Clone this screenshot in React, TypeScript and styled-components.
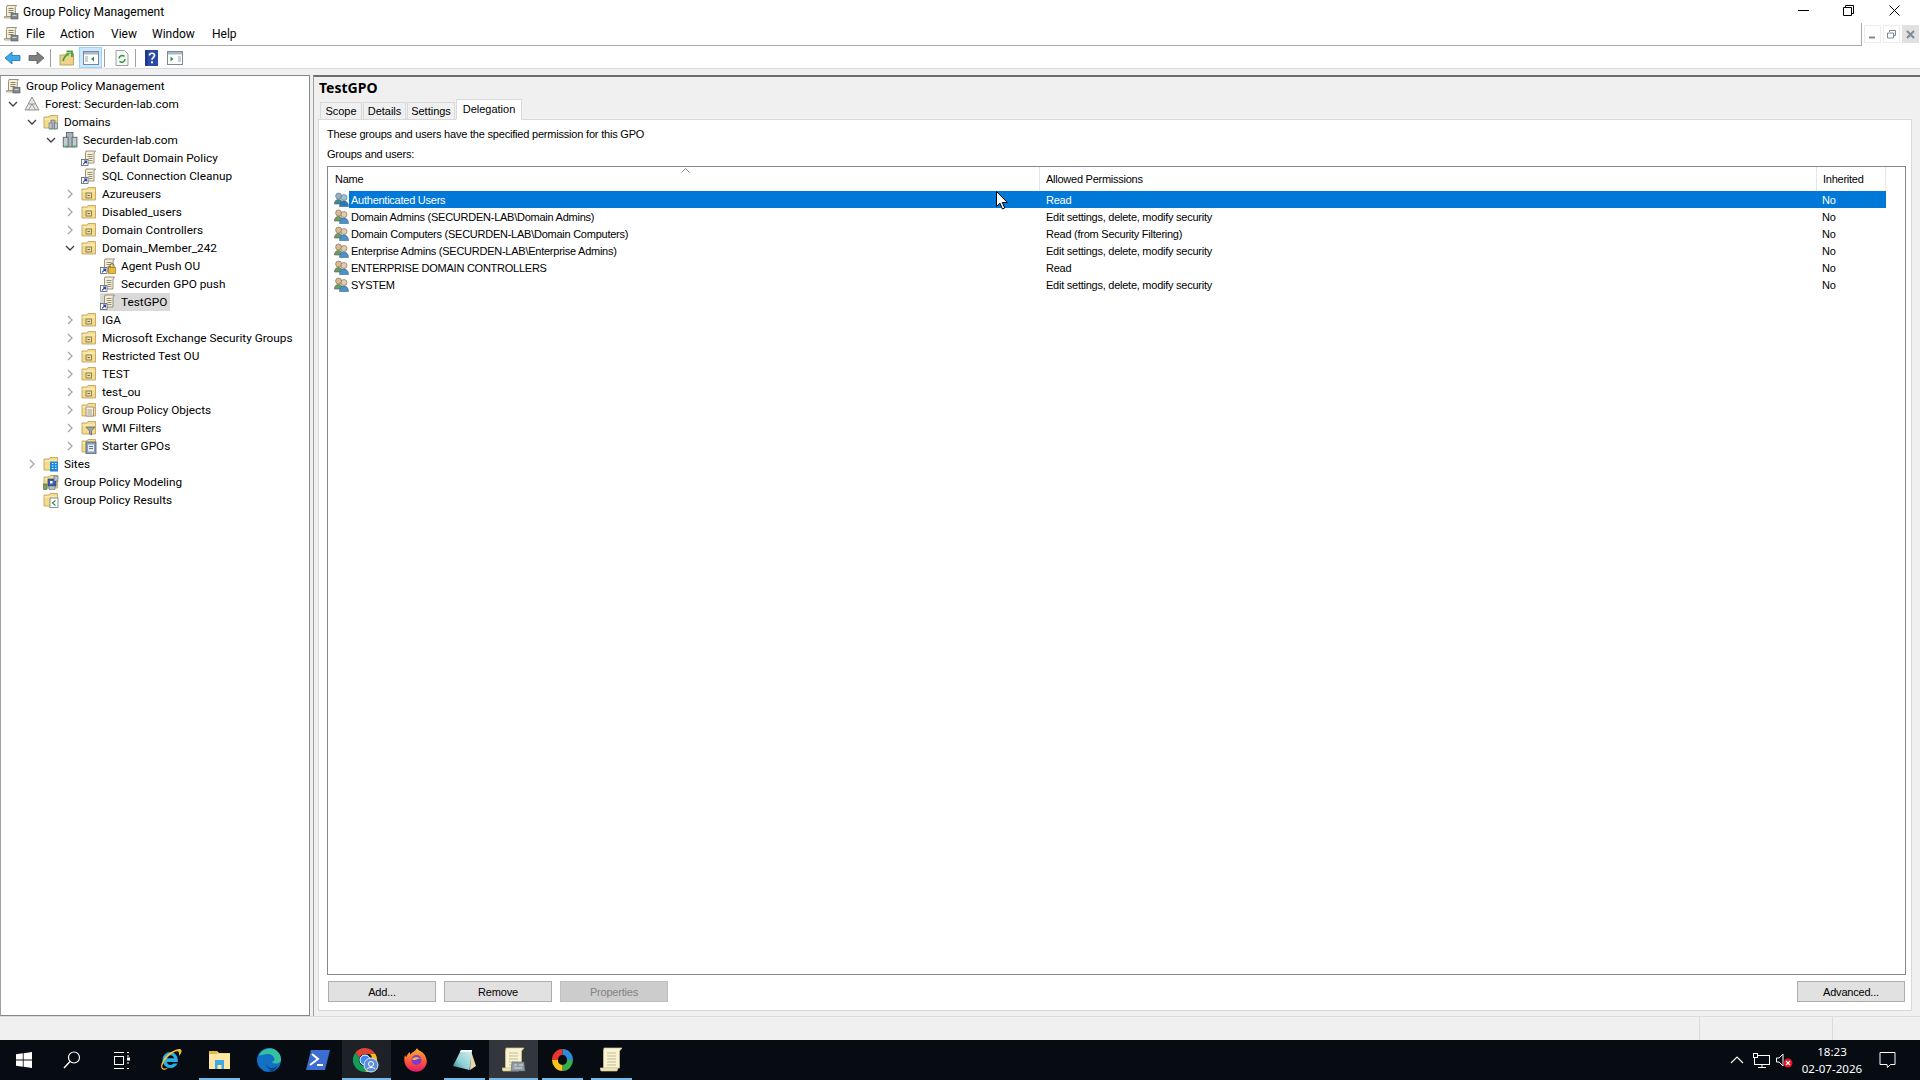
import * as React from 'react';
import styled, { createGlobalStyle } from 'styled-components';

const GlobalStyle = createGlobalStyle`
    html, body {
        margin: 0;
        padding: 0;
        background: #f0f0f0;
        overflow: hidden;
    }
    * {
        box-sizing: border-box;
    }
`;

const UI_FONT = `"Noto Sans", "Open Sans", sans-serif`;
const TREE_FONT = `Roboto, "Noto Sans", sans-serif`;
const LIST_FONT = `"Liberation Sans", Arial, sans-serif`;

//Page:

const Screen = styled.div`
    width: 1920px;
    height: 1080px;
    display: flex;
    flex-direction: column;
    font-family: ${UI_FONT};
    font-size: 12px;
    color: #000;
    background: #f0f0f0;
`;

const TitleBar = styled.div`
    height: 23px;
    flex: none;
    display: flex;
    align-items: center;
    background: #fff;
    padding-left: 3px;
`;

const TitleText = styled.span`
    margin-left: 4px;
    font-family: ${TREE_FONT};
    font-size: 12px;
`;

const WindowControls = styled.div`
    margin-left: auto;
    display: flex;
    align-items: center;
    height: 23px;
    padding: 0 3px 3px 0;
`;

const WindowButton = styled.div`
    width: 45.5px;
    height: 20px;
    display: flex;
    align-items: center;
    justify-content: center;
`;

const MenuRow = styled.div`
    height: 23px;
    flex: none;
    display: flex;
    background: #fff;
`;

const MenuBar = styled.div`
    width: 1862px;
    display: flex;
    align-items: center;
    padding-left: 3px;
    border-bottom: 1px solid #a9a9a9;
    border-right: 1px solid #a9a9a9;
`;

const MenuSpacer = styled.div`
    width: 7px;
`;

const MenuItem = styled.span<{ $width: number }>`
    width: ${(props) => props.$width}px;
    font-family: ${TREE_FONT};
    font-size: 12px;
`;

const MdiControls = styled.div`
    display: flex;
    align-items: center;
    gap: 2px;
    padding-left: 2px;
    height: 22px;
`;

const MdiButton = styled.div<{ $close?: boolean }>`
    width: 17px;
    height: 18px;
    display: flex;
    align-items: center;
    justify-content: center;
    border: 1px solid ${(props) => (props.$close ? '#e1e1e1' : '#ececec')};
    background: ${(props) => (props.$close ? '#e1e1e1' : '#fff')};
`;

const Toolbar = styled.div`
    height: 23px;
    flex: none;
    display: flex;
    align-items: center;
    background: #fff;
    border-bottom: 1px solid #dadada;
    padding-top: 1px;
`;

const ToolButton = styled.div<{ $width: number; $active?: boolean }>`
    width: ${(props) => props.$width}px;
    height: 21px;
    display: flex;
    align-items: center;
    justify-content: center;
    background: ${(props) => (props.$active ? '#cce8ff' : 'transparent')};
    border: 1px solid ${(props) => (props.$active ? '#99d1ff' : 'transparent')};
`;

const ToolSeparator = styled.div<{ $left: number; $right: number }>`
    width: 1px;
    height: 18px;
    background: #a0a0a0;
    margin: 0 ${(props) => props.$right}px 0 ${(props) => props.$left}px;
`;

const Workspace = styled.div`
    height: 948px;
    flex: none;
    display: flex;
    padding-top: 6px;
    border-bottom: 1px solid #dcdcdc;
`;

//Tree:

const TreePanel = styled.div`
    width: 310px;
    flex: none;
    background: #fff;
    border: 1px solid #828790;
    border-left-color: #a0a0a0;
    padding-top: 1px;
`;

const TreeRow = styled.div<{ $level: number }>`
    height: 18px;
    display: flex;
    align-items: center;
    padding-left: ${(props) => (props.$level === 0 ? 4 : 4 + (props.$level - 1) * 19)}px;
`;

const ChevronSlot = styled.div`
    width: 19px;
    height: 18px;
    flex: none;
    display: flex;
    align-items: center;
    padding-left: 3px;
`;

const TreeNode = styled.div<{ $selected?: boolean }>`
    height: 18px;
    display: flex;
    align-items: center;
    gap: 5px;
    padding-right: 3px;
    background: ${(props) => (props.$selected ? '#d9d9d9' : 'transparent')};
`;

const TreeLabel = styled.span`
    font-family: ${TREE_FONT};
    font-size: 11.8px;
    white-space: nowrap;
`;

//Right pane:

const DetailPane = styled.div`
    margin-left: 3px;
    flex: 1;
    display: flex;
    flex-direction: column;
    border-top: 2px solid #6d6d6d;
    border-left: 1px solid #a0a0a0;
    padding: 0 8px 5px 4px;
    min-width: 0;
`;

const PaneTitle = styled.div`
    height: 22px;
    padding-left: 1px;
    line-height: 21px;
    font-size: 14px;
    font-weight: 700;
`;

const TabStrip = styled.div`
    height: 21px;
    flex: none;
    display: flex;
    align-items: flex-end;
    padding-left: 2px;
    position: relative;
    z-index: 1;
    margin-bottom: -1px;
`;

const Tab = styled.div<{ $width: number; $active?: boolean }>`
    width: ${(props) => props.$width}px;
    height: ${(props) => (props.$active ? 21 : 18)}px;
    margin-right: 1px;
    display: flex;
    align-items: center;
    justify-content: center;
    font-family: ${LIST_FONT};
    font-size: 11px;
    padding-bottom: ${(props) => (props.$active ? 2 : 0)}px;
    background: ${(props) => (props.$active ? '#fff' : '#f0f0f0')};
    border: 1px solid #d9d9d9;
    border-bottom-color: ${(props) => (props.$active ? '#fff' : '#d9d9d9')};
`;

const TabBody = styled.div`
    flex: 1;
    display: flex;
    flex-direction: column;
    background: #fff;
    border: 1px solid #d9d9d9;
    padding: 5px 5px 8px 8px;
    min-height: 0;
`;

const InfoText = styled.div`
    height: 18px;
    line-height: 18px;
    font-family: ${LIST_FONT};
    font-size: 11px;
    letter-spacing: -0.2px;
`;

const FieldLabel = styled(InfoText)`
    margin-top: 2px;
`;

const ListBox = styled.div`
    flex: 1;
    margin-top: 3px;
    border: 1px solid #828790;
    position: relative;
    font-family: ${LIST_FONT};
    font-size: 11px;
    letter-spacing: -0.25px;
    min-height: 0;
`;

const HeaderRow = styled.div`
    height: 24px;
    display: flex;
`;

const HeaderCell = styled.div<{ $width: number; $first?: boolean }>`
    width: ${(props) => props.$width}px;
    flex: none;
    display: flex;
    align-items: center;
    padding-left: ${(props) => (props.$first ? 7 : 6)}px;
    padding-bottom: 1px;
    border-right: 1px solid #e5e5e5;
    position: relative;
`;

const SortCaret = styled.svg`
    position: absolute;
    left: 353px;
    top: 1px;
`;

const DataRow = styled.div`
    height: 17px;
    display: flex;
    align-items: center;
`;

const RowIcon = styled.div`
    width: 21px;
    padding-left: 6px;
    flex: none;
    display: flex;
`;

const RowCells = styled.div<{ $selected?: boolean }>`
    width: 1537px;
    height: 17px;
    display: flex;
    align-items: center;
    color: ${(props) => (props.$selected ? '#fff' : '#000')};
    background: ${(props) => (props.$selected ? '#0078d7' : 'transparent')};
`;

const RowCell = styled.div<{ $width: number; $pad: number }>`
    width: ${(props) => props.$width}px;
    flex: none;
    padding-left: ${(props) => props.$pad}px;
    white-space: nowrap;
`;

const MouseCursor = styled.svg`
    position: absolute;
    left: 668px;
    top: 24px;
`;

const ButtonRow = styled.div`
    height: 21px;
    flex: none;
    margin-top: 6px;
    display: flex;
    gap: 8px;
    padding: 0 1px;
`;

const DialogButton = styled.div<{ $disabled?: boolean; $push?: boolean }>`
    width: 108px;
    height: 21px;
    display: flex;
    align-items: center;
    justify-content: center;
    font-family: ${LIST_FONT};
    font-size: 11px;
    letter-spacing: -0.2px;
    margin-left: ${(props) => (props.$push ? 'auto' : 0)};
    color: ${(props) => (props.$disabled ? '#838383' : '#000')};
    background: ${(props) => (props.$disabled ? '#cccccc' : '#e1e1e1')};
    border: 1px solid ${(props) => (props.$disabled ? '#bfbfbf' : '#adadad')};
`;

//Status bar:

const StatusBar = styled.div`
    height: 23px;
    flex: none;
    display: flex;
    justify-content: flex-end;
`;

const StatusCell = styled.div<{ $width: number }>`
    width: ${(props) => props.$width}px;
    border-left: 1px solid #dcdcdc;
`;

//Taskbar:

const Taskbar = styled.div`
    height: 40px;
    flex: none;
    display: flex;
    align-items: stretch;
    background: #070b12;
`;

const ShellButton = styled.div<{ $width: number }>`
    width: ${(props) => props.$width}px;
    flex: none;
    display: flex;
    align-items: center;
    justify-content: center;
`;

const AppButton = styled.div<{ $state?: 'running' | 'active' | 'focused' }>`
    width: 49px;
    flex: none;
    display: flex;
    align-items: center;
    justify-content: center;
    position: relative;
    background: ${(props) =>
        props.$state === 'focused' ? '#33363b' : props.$state === 'active' ? '#1e2126' : 'transparent'};

    &::after {
        content: '';
        display: ${(props) => (props.$state ? 'block' : 'none')};
        position: absolute;
        bottom: 0;
        height: 2px;
        background: #76b9ed;
        left: ${(props) => (props.$state === 'running' ? 4 : 0)}px;
        right: ${(props) => (props.$state === 'running' ? 4 : 0)}px;
    }
`;

const Tray = styled.div`
    margin-left: auto;
    display: flex;
    align-items: center;
    color: #fff;
`;

const TrayIcon = styled.div`
    width: 24px;
    display: flex;
    align-items: center;
    justify-content: center;
`;

const Clock = styled.div`
    width: 68px;
    margin-left: 1px;
    text-align: center;
    font-size: 11.6px;
    line-height: 17.5px;
    white-space: nowrap;
`;

const NotifyButton = styled.div`
    width: 54px;
    display: flex;
    align-items: center;
    justify-content: center;
    padding-right: 12px;
`;

//Icons:

const Chevron = ({ open }: { open: boolean }) =>
    open ? (
        <svg width="10" height="10" viewBox="0 0 10 10">
            <path d="M1 3l4 4 4-4" fill="none" stroke="#404040" strokeWidth="1.3" />
        </svg>
    ) : (
        <svg width="10" height="10" viewBox="0 0 10 10">
            <path d="M3 1l4 4-4 4" fill="none" stroke="#a6a6a6" strokeWidth="1.3" />
        </svg>
    );

const ConsoleIcon = ({ size = 16 }: { size?: number }) => (
    <svg width={size} height={size} viewBox="0 0 16 16">
        <path d="M4 1.5h9.5l-1.2 2v9H3.5v-9z" fill="#f7efcf" stroke="#7d7966" strokeWidth="0.8" />
        <path d="M5.5 4.5h5M5.5 6.5h5M5.5 8.5h5" stroke="#77776e" strokeWidth="0.9" />
        <path d="M1.5 12.5h9V14h-9z" fill="#efe6c2" stroke="#7d7966" strokeWidth="0.6" />
        <rect x="8" y="9.5" width="7" height="5.5" fill="#7f8a90" stroke="#4f565a" strokeWidth="0.6" />
        <path d="M9.5 11.5h4" stroke="#d6dbde" strokeWidth="0.9" />
    </svg>
);

const GpoLinkIcon = ({ locked }: { locked?: boolean }) => (
    <svg width="16" height="16" viewBox="0 0 16 16">
        <path d="M5 1h9.5L13 3v10H4.5V3z" fill="#f7efcf" stroke="#7d7966" strokeWidth="0.8" />
        <path d="M6.5 4.5h5M6.5 6.5h5M7.5 8.5h4M7.5 10.5h4" stroke="#77776e" strokeWidth="0.8" />
        <rect x="0.5" y="9.5" width="6.5" height="6" fill="#fff" stroke="#55606e" strokeWidth="0.8" />
        <path d="M2 14.3l3-3M3 11h2.4v2.4" fill="none" stroke="#2b3fb0" strokeWidth="1.1" />
        {locked && (
            <>
                <path d="M10 9.5v-2a2 2 0 014 0v2" fill="none" stroke="#8a6a20" strokeWidth="1" />
                <rect x="8.5" y="9.5" width="7" height="6" fill="#e8b93a" stroke="#9a7416" strokeWidth="0.7" />
            </>
        )}
    </svg>
);

const FolderBase = () => (
    <>
        <path d="M1 3h5l1-1.5h7.5V14H1z" fill="#f5dc8c" stroke="#b99a50" strokeWidth="0.8" />
        <path d="M1.4 5h12.8" stroke="#fff4c9" strokeWidth="1" />
    </>
);

const OuIcon = () => (
    <svg width="16" height="16" viewBox="0 0 16 16">
        <FolderBase />
        <rect x="5" y="7" width="5.5" height="5" fill="#e8dcb0" stroke="#7a6c3c" strokeWidth="0.8" />
        <path d="M6.5 9.5H9" stroke="#5a5030" strokeWidth="0.8" />
    </svg>
);

const ForestIcon = () => (
    <svg width="16" height="16" viewBox="0 0 16 16">
        <path d="M8 1l7 13H1z" fill="#e8e8e8" stroke="#777" strokeWidth="0.8" />
        <path d="M4.5 8h7M8 8l-3.5 6M8 8l3.5 6" fill="none" stroke="#777" strokeWidth="0.7" />
    </svg>
);

const ServerMark = ({ x, y }: { x: number; y: number }) => (
    <g transform={`translate(${x} ${y})`}>
        <rect x="2" y="0" width="4" height="9" fill="#a9b4ba" stroke="#5f6a70" strokeWidth="0.6" />
        <rect x="0" y="3" width="3" height="6" fill="#c2cbd0" stroke="#5f6a70" strokeWidth="0.6" />
        <rect x="5.5" y="3" width="3" height="6" fill="#c2cbd0" stroke="#5f6a70" strokeWidth="0.6" />
        <rect x="1" y="8" width="1.2" height="1.2" fill="#44c04a" />
        <rect x="6.5" y="8" width="1.2" height="1.2" fill="#44c04a" />
    </g>
);

const DomainsIcon = () => (
    <svg width="16" height="16" viewBox="0 0 16 16">
        <FolderBase />
        <ServerMark x={6} y={6} />
    </svg>
);

const DomainIcon = () => (
    <svg width="16" height="16" viewBox="0 0 16 16">
        <g transform="translate(-3.5 -7.5) scale(1.6)">
            <ServerMark x={3} y={5} />
        </g>
    </svg>
);

const GpoFolderIcon = () => (
    <svg width="16" height="16" viewBox="0 0 16 16">
        <FolderBase />
        <path d="M5 5h8.5l-1 1.5V14H5z" fill="#f7f3e2" stroke="#85806c" strokeWidth="0.8" />
        <path d="M6.5 8H11M6.5 10H11M6.5 12H11" stroke="#85806c" strokeWidth="0.8" />
    </svg>
);

const FilterFolderIcon = () => (
    <svg width="16" height="16" viewBox="0 0 16 16">
        <FolderBase />
        <path d="M5 7h9l-3.5 4v4l-2-1v-3z" fill="#9aa6ae" stroke="#5d6870" strokeWidth="0.7" />
    </svg>
);

const StarterIcon = () => (
    <svg width="16" height="16" viewBox="0 0 16 16">
        <FolderBase />
        <rect x="5" y="4" width="10" height="12" fill="#8da0b8" stroke="#4a5666" strokeWidth="0.8" />
        <rect x="7" y="6.5" width="6" height="7" fill="#e4eaf2" />
        <path d="M8 8.5h4M8 10.5h4" stroke="#4a5666" strokeWidth="0.8" />
    </svg>
);

const SitesIcon = () => (
    <svg width="16" height="16" viewBox="0 0 16 16">
        <FolderBase />
        <rect x="7" y="5.5" width="8" height="10" fill="#1f86d9" />
        <path d="M9 7.5h1.5M12 7.5h1.5M9 10h1.5M12 10h1.5M9 12.5h1.5M12 12.5h1.5" stroke="#e8f4ff" strokeWidth="1.2" />
    </svg>
);

const ModelingIcon = () => (
    <svg width="16" height="16" viewBox="0 0 16 16">
        <FolderBase />
        <rect x="0.5" y="10" width="3.5" height="5.5" fill="#76a05c" stroke="#4c6a3a" strokeWidth="0.6" />
        <rect x="5" y="5" width="8" height="7" fill="#3a5fb0" stroke="#223a70" strokeWidth="0.7" />
        <rect x="7" y="7" width="2.5" height="2.5" fill="#fff" />
        <rect x="11" y="2" width="4" height="5" fill="#b8c2cc" stroke="#5d6870" strokeWidth="0.6" />
        <rect x="6" y="12" width="6" height="3.5" fill="#b8c2cc" stroke="#5d6870" strokeWidth="0.6" />
    </svg>
);

const ResultsIcon = () => (
    <svg width="16" height="16" viewBox="0 0 16 16">
        <FolderBase />
        <rect x="7" y="6" width="8" height="9.5" fill="#fff" stroke="#6c7680" strokeWidth="0.8" />
        <path d="M12.5 8.500l-3 2.500 3 2.500" fill="none" stroke="#3f8a4a" strokeWidth="1.2" />
    </svg>
);

const UsersIcon = ({ selected }: { selected: boolean }) => (
    <svg width="15" height="15" viewBox="0 0 15 15">
        <circle cx="4.6" cy="4" r="3" fill={selected ? '#8fb2cc' : '#e3b78a'} stroke="#5f6a64" strokeWidth="0.6" />
        <path d="M.5 12c0-3 1.5-4.500 4-4.500s4 1.500 4 4.500z" fill={selected ? '#3f8a96' : '#6d9c62'} stroke="#3f5f50" strokeWidth="0.6" />
        <circle cx="10" cy="5.5" r="3" fill={selected ? '#9fc0dc' : '#edc9a0'} stroke="#5f6a64" strokeWidth="0.6" />
        <path d="M5.5 14.500c0-3.500 2-5.500 4.500-5.500s4.500 2 4.500 5.500z" fill={selected ? '#2a78bc' : '#4f90c6'} stroke="#356a94" strokeWidth="0.6" />
    </svg>
);

const BackIcon = () => (
    <svg width="17" height="14" viewBox="0 0 17 14">
        <path d="M1 7l7-6v3.500h8v5H8V13z" fill="#3fa7ec" stroke="#1f6fb0" strokeWidth="0.8" />
    </svg>
);

const ForwardIcon = () => (
    <svg width="17" height="14" viewBox="0 0 17 14">
        <path d="M16 7L9 1v3.500H1v5h8V13z" fill="#7f7f7f" stroke="#5c5c5c" strokeWidth="0.8" />
    </svg>
);

const UpFolderIcon = () => (
    <svg width="16" height="16" viewBox="0 0 16 16">
        <path d="M1 5h5l1-1.500h7.500V15H1z" fill="#eed28a" stroke="#b0924a" strokeWidth="0.8" />
        <path d="M4 11c1-4 3-6 6-7M7.500 1.500H13V7" fill="none" stroke="#3fa33a" strokeWidth="1.8" />
    </svg>
);

const PanelIcon = ({ side }: { side: 'left' | 'right' }) => (
    <svg width="16" height="14" viewBox="0 0 16 14">
        <rect x="0.5" y="0.5" width="15" height="13" fill="#fff" stroke="#7a8a96" />
        <rect x="1" y="1" width="14" height="2.5" fill="#a9b8c4" />
        {side === 'left' ? (
            <>
                <path d="M2 6h3M2 8h3M2 10h3" stroke="#8a98a4" strokeWidth="0.9" />
                <path d="M11 5.500v5l-3-2.500z" fill="#2f9a3a" />
            </>
        ) : (
            <>
                <path d="M11 6h3M11 8h3M11 10h3" stroke="#8a98a4" strokeWidth="0.9" />
                <path d="M3.500 5.500v5l3-2.500z" fill="#2f9a3a" />
            </>
        )}
    </svg>
);

const RefreshIcon = () => (
    <svg width="14" height="16" viewBox="0 0 14 16">
        <path d="M1 .5h8.500L13 4v11.500H1z" fill="#f8f8f8" stroke="#8a8a8a" strokeWidth="0.8" />
        <path d="M4 8.500a3.200 3.200 0 015.500-2M10 9a3.200 3.200 0 01-5.500 2.200" fill="none" stroke="#2f9a3a" strokeWidth="1.5" />
    </svg>
);

const HelpIcon = () => (
    <svg width="13" height="16" viewBox="0 0 13 16">
        <rect width="13" height="16" fill="#2a4aa8" />
        <rect x="0.5" y="0.5" width="2" height="15" fill="#1d3580" />
        <path d="M4.500 5.500c0-3 5-3 5 0 0 2-2.500 2-2.500 4.200" fill="none" stroke="#fff" strokeWidth="1.7" />
        <rect x="6" y="11.3" width="2" height="2" fill="#fff" />
    </svg>
);

const MouseArrow = () => (
    <MouseCursor width="13" height="20" viewBox="0 0 13 20">
        <path d="M.5.500v15l3.500-3.300 2.400 5.800 2.300-1-2.400-5.500h5z" fill="#fff" stroke="#000" strokeWidth="1" />
    </MouseCursor>
);

const WindowsLogo = () => (
    <svg width="16" height="16" viewBox="0 0 16 16">
        <path d="M0 2.300l6.800-1v6.200H0zM7.600 1.200L16 0v7.500H7.600zM0 8.400h6.800v6.300L0 13.700zM7.600 8.400H16V16l-8.400-1.200z" fill="#fff" />
    </svg>
);

const SearchIcon = () => (
    <svg width="18" height="18" viewBox="0 0 18 18">
        <circle cx="11" cy="6.5" r="5.5" fill="none" stroke="#fff" strokeWidth="1.2" />
        <path d="M7 10.500L1 17" stroke="#fff" strokeWidth="1.4" />
    </svg>
);

const TaskViewIcon = () => (
    <svg width="17" height="17" viewBox="0 0 17 17">
        <path d="M1 .5h10M1 16.500h10" stroke="#fff" />
        <rect x="1.5" y="4.5" width="9" height="8" fill="none" stroke="#fff" />
        <path d="M14 .5h2M14 16.500h2" stroke="#fff" />
        <rect x="14" y="5.5" width="3" height="3" fill="#fff" />
        <path d="M15 3v2M15 10v2" stroke="#fff" />
    </svg>
);

const IeIcon = () => (
    <svg width="24" height="24" viewBox="0 0 24 24">
        <path d="M11.500 4a8 8 0 100 16c3.300 0 5.800-1.800 7-4.500h-4.600c-.6 1-1.500 1.500-2.500 1.500a3.500 3.500 0 01-3.400-3h10.800c.6-5.500-2.700-10-7.300-10zM8 10.200c.3-1.700 1.800-3 3.500-3s3.200 1.300 3.500 3z" fill="#29aee8" />
        <path d="M3 21C0 18 5 8 12 4s10-3.500 10.500-1.500c.4 1.700-1 3.500-2.500 5.500 0-2.500.5-4.500-1.500-4.800C15 2.800 8 9 5 14c-2 3.500-2.500 6 0 6.500 1.500.3 3-.3 5-1.500-3 3-5.500 3.500-7 2z" fill="#f5c02e" />
    </svg>
);

const FolderAppIcon = () => (
    <svg width="22" height="20" viewBox="0 0 22 20">
        <path d="M0 1h8l2 2h11v16H0z" fill="#f6d67e" />
        <rect x="0" y="4" width="21" height="15" fill="#fce7a4" />
        <rect x="0" y="1" width="8" height="3" fill="#e8b53e" />
        <path d="M6 10h9v9h-2.500v-4h-4v4H6z" fill="#3fa9e6" />
    </svg>
);

const EdgeIcon = () => (
    <svg width="24" height="24" viewBox="0 0 24 24">
        <circle cx="12" cy="12" r="12" fill="#1271c4" />
        <path d="M2 8C4 2 10 0 14 .5c5 .5 10 5 10 11 0 3-2.500 4-5 4-2 0-4-.5-4-2 2 0 2.500-1 2.500-2 0-3-3-5.500-6.500-5.500C7 6 3.500 7 2 8z" fill="#35c1a0" />
        <path d="M9 15c0 3 3 5 6 5 2.500 0 4.500-1 6-3-2 5-6 7-10 6.500 2-1 3-2 3-2-3 0-5-3-5-6.500z" fill="#0c3f8a" />
    </svg>
);

const PowerShellIcon = () => (
    <svg width="24" height="20" viewBox="0 0 24 20">
        <path d="M5 0h19l-5 20H0z" fill="#3c6ed0" />
        <path d="M6 4l6 5-8 6" fill="none" stroke="#fff" strokeWidth="2" />
        <path d="M11 15h6" stroke="#fff" strokeWidth="2" />
    </svg>
);

const ChromeIcon = () => (
    <svg width="27" height="25" viewBox="0 0 27 25">
        <path d="M12 0a12 12 0 0110.400 6H12a6 6 0 00-5.500 3.500L2.200 5A12 12 0 0112 0z" fill="#db4437" />
        <path d="M22.400 6A12 12 0 0112 24l5.200-9A6 6 0 0017 6z" fill="#f4c20d" />
        <path d="M2.200 5A12 12 0 0012 24l5.200-9a6 6 0 01-10.700-5.500z" fill="#0f9d58" />
        <circle cx="12" cy="12" r="5" fill="#4285f4" stroke="#fff" strokeWidth="1" />
        <circle cx="18" cy="17" r="7" fill="#5b8ed8" stroke="#d9e6f8" strokeWidth="1" />
        <circle cx="18" cy="16" r="2.5" fill="none" stroke="#fff" strokeWidth="1" />
        <path d="M14 21c1-2 7-2 8 0" fill="none" stroke="#fff" strokeWidth="1" />
    </svg>
);

const FirefoxIcon = () => (
    <svg width="24" height="24" viewBox="0 0 24 24">
        <defs>
            <linearGradient id="foxBody" x1="0" y1="0" x2="0" y2="1">
                <stop offset="0" stopColor="#ffb52e" />
                <stop offset="0.55" stopColor="#ff5a36" />
                <stop offset="1" stopColor="#e6196b" />
            </linearGradient>
        </defs>
        <path d="M13 0c1 3 5 3 7 6 3 4 4 9 1 13-3 5-10 6-15 3C1 19-1 13 1 7c.3 1 .8 1.500 1.500 2C3 7 4 5 6 4c-.3 1.200 0 2 .5 2.500C8 4 12 3 13 0z" fill="url(#foxBody)" />
        <circle cx="12.5" cy="12" r="5" fill="#7a3bd0" />
        <path d="M8 11c2-2.500 7-2.500 9 0-2-1-3-.5-4.500.5S9 12 8 11z" fill="#ffb52e" />
    </svg>
);

const NotepadIcon = () => (
    <svg width="23" height="21" viewBox="0 0 23 21">
        <defs>
            <linearGradient id="padBody" x1="0" y1="1" x2="1" y2="0">
                <stop offset="0" stopColor="#2f7f8a" />
                <stop offset="0.4" stopColor="#8fd0d8" />
                <stop offset="1" stopColor="#d6f0ee" />
            </linearGradient>
        </defs>
        <path d="M18 1l5 15-6 4z" fill="#e6d9a8" />
        <path d="M8 0h11l-2.500 20L0 16z" fill="url(#padBody)" />
        <path d="M8 0h11l-.4 2H7z" fill="#f2f7f7" />
    </svg>
);

const LargeScroll = ({ badge }: { badge?: boolean }) => (
    <svg width="24" height="26" viewBox="0 0 24 26">
        <path d="M4 1h18l-2.500 3v17H3.500V4z" fill="#fbf3cf" stroke="#cfc594" strokeWidth="0.7" />
        <path d="M0 21h18l-1 3H1z" fill="#f1e6b6" stroke="#cfc594" strokeWidth="0.7" />
        <path d="M7 6h9M7 9h9M7 12h9M7 15h9M7 18h9" stroke="#b8b49c" strokeWidth="0.9" />
        {badge && (
            <>
                <path d="M10 15h12l1 9H9z" fill="#8f9ca3" stroke="#5b666c" strokeWidth="0.6" />
                <path d="M12 18h3M17 18h4M12 21h8" stroke="#d5dde0" strokeWidth="1" />
            </>
        )}
    </svg>
);

const RingIcon = () => (
    <svg width="23" height="24" viewBox="0 0 23 24">
        <path d="M11.500 1A10.500 11 0 0122 12h-6a4.500 4.500 0 00-4.500-5z" fill="#2e8bd8" />
        <path d="M22 12a10.500 11 0 01-10.500 11v-6a4.500 4.500 0 004.500-5z" fill="#34b04a" />
        <path d="M11.500 23A10.500 11 0 011 12h6a4.500 4.500 0 004.500 5z" fill="#f7c31c" />
        <path d="M1 12A10.500 11 0 0111.500 1v6A4.500 4.500 0 007 12z" fill="#e8352e" />
    </svg>
);

const TrayChevron = () => (
    <svg width="14" height="8" viewBox="0 0 14 8">
        <path d="M1 7l6-6 6 6" fill="none" stroke="#fff" strokeWidth="1.1" />
    </svg>
);

const NetworkIcon = () => (
    <svg width="17" height="15" viewBox="0 0 17 15">
        <rect x="1.5" y="2.5" width="15" height="9" fill="none" stroke="#fff" />
        <path d="M9 11.500v3M5 14.500h8" stroke="#fff" />
        <rect x="0.5" y="0.5" width="4" height="4" fill="#070b12" stroke="#fff" />
    </svg>
);

const VolumeIcon = () => (
    <svg width="18" height="15" viewBox="0 0 18 15">
        <path d="M.5 5H3l4-4v12L3 9H.5z" fill="none" stroke="#fff" />
        <circle cx="12" cy="10" r="4.5" fill="#e81123" />
        <path d="M10 8l4 4M14 8l-4 4" stroke="#fff" strokeWidth="1.2" />
    </svg>
);

const NotificationIcon = () => (
    <svg width="17" height="16" viewBox="0 0 17 16">
        <path d="M1 .5h15v12h-4.500l-3 3-.5-3H1z" fill="none" stroke="#fff" />
    </svg>
);

//Data:

type Node = {
    level: number;
    label: string;
    icon: React.ReactNode;
    chevron?: 'open' | 'closed';
    selected?: boolean;
};

const treeNodes: Node[] = [
    { level: 0, label: 'Group Policy Management', icon: <ConsoleIcon /> },
    { level: 1, label: 'Forest: Securden-lab.com', icon: <ForestIcon />, chevron: 'open' },
    { level: 2, label: 'Domains', icon: <DomainsIcon />, chevron: 'open' },
    { level: 3, label: 'Securden-lab.com', icon: <DomainIcon />, chevron: 'open' },
    { level: 4, label: 'Default Domain Policy', icon: <GpoLinkIcon /> },
    { level: 4, label: 'SQL Connection Cleanup', icon: <GpoLinkIcon /> },
    { level: 4, label: 'Azureusers', icon: <OuIcon />, chevron: 'closed' },
    { level: 4, label: 'Disabled_users', icon: <OuIcon />, chevron: 'closed' },
    { level: 4, label: 'Domain Controllers', icon: <OuIcon />, chevron: 'closed' },
    { level: 4, label: 'Domain_Member_242', icon: <OuIcon />, chevron: 'open' },
    { level: 5, label: 'Agent Push OU', icon: <GpoLinkIcon locked /> },
    { level: 5, label: 'Securden GPO push', icon: <GpoLinkIcon /> },
    { level: 5, label: 'TestGPO', icon: <GpoLinkIcon />, selected: true },
    { level: 4, label: 'IGA', icon: <OuIcon />, chevron: 'closed' },
    { level: 4, label: 'Microsoft Exchange Security Groups', icon: <OuIcon />, chevron: 'closed' },
    { level: 4, label: 'Restricted Test OU', icon: <OuIcon />, chevron: 'closed' },
    { level: 4, label: 'TEST', icon: <OuIcon />, chevron: 'closed' },
    { level: 4, label: 'test_ou', icon: <OuIcon />, chevron: 'closed' },
    { level: 4, label: 'Group Policy Objects', icon: <GpoFolderIcon />, chevron: 'closed' },
    { level: 4, label: 'WMI Filters', icon: <FilterFolderIcon />, chevron: 'closed' },
    { level: 4, label: 'Starter GPOs', icon: <StarterIcon />, chevron: 'closed' },
    { level: 2, label: 'Sites', icon: <SitesIcon />, chevron: 'closed' },
    { level: 2, label: 'Group Policy Modeling', icon: <ModelingIcon /> },
    { level: 2, label: 'Group Policy Results', icon: <ResultsIcon /> },
];

const permissionRows = [
    ['Authenticated Users', 'Read', 'No'],
    ['Domain Admins (SECURDEN-LAB\\Domain Admins)', 'Edit settings, delete, modify security', 'No'],
    ['Domain Computers (SECURDEN-LAB\\Domain Computers)', 'Read (from Security Filtering)', 'No'],
    ['Enterprise Admins (SECURDEN-LAB\\Enterprise Admins)', 'Edit settings, delete, modify security', 'No'],
    ['ENTERPRISE DOMAIN CONTROLLERS', 'Read', 'No'],
    ['SYSTEM', 'Edit settings, delete, modify security', 'No'],
];

const menuItems: [string, number][] = [
    ['File', 34],
    ['Action', 51],
    ['View', 41],
    ['Window', 60],
    ['Help', 40],
];

const tabs: [string, number, boolean][] = [
    ['Scope', 42, false],
    ['Details', 43, false],
    ['Settings', 48, false],
    ['Delegation', 66, true],
];

const App = (): JSX.Element => {
    return (
        <Screen>
            <GlobalStyle />
            <TitleBar>
                <ConsoleIcon />
                <TitleText>Group Policy Management</TitleText>
                <WindowControls>
                    <WindowButton>
                        <svg width="11" height="11" viewBox="0 0 11 11">
                            <path d="M0 5.500h11" stroke="#000" />
                        </svg>
                    </WindowButton>
                    <WindowButton>
                        <svg width="11" height="11" viewBox="0 0 11 11">
                            <path d="M2.500 2.500v-2h8v8h-2M.5 2.500h8v8h-8z" fill="none" stroke="#000" />
                        </svg>
                    </WindowButton>
                    <WindowButton>
                        <svg width="11" height="11" viewBox="0 0 11 11">
                            <path d="M.5.500l10 10M10.500.500l-10 10" stroke="#000" />
                        </svg>
                    </WindowButton>
                </WindowControls>
            </TitleBar>
            <MenuRow>
                <MenuBar>
                    <ConsoleIcon />
                    <MenuSpacer />
                    {menuItems.map(([label, width]) => (
                        <MenuItem key={label} $width={width}>
                            {label}
                        </MenuItem>
                    ))}
                </MenuBar>
                <MdiControls>
                    <MdiButton>
                        <svg width="9" height="9" viewBox="0 0 9 9">
                            <path d="M1 7.500h6" stroke="#7a8a96" strokeWidth="2" />
                        </svg>
                    </MdiButton>
                    <MdiButton>
                        <svg width="9" height="9" viewBox="0 0 9 9">
                            <path d="M2.500 2V.5h6v5h-2M.5 3h6v5h-6z" fill="none" stroke="#7a8a96" />
                        </svg>
                    </MdiButton>
                    <MdiButton $close>
                        <svg width="9" height="9" viewBox="0 0 9 9">
                            <path d="M1 1l7 7M8 1L1 8" stroke="#7a8a96" strokeWidth="2" />
                        </svg>
                    </MdiButton>
                </MdiControls>
            </MenuRow>
            <Toolbar>
                <ToolButton $width={25}>
                    <BackIcon />
                </ToolButton>
                <ToolButton $width={22}>
                    <ForwardIcon />
                </ToolButton>
                <ToolSeparator $left={3} $right={3} />
                <ToolButton $width={25}>
                    <UpFolderIcon />
                </ToolButton>
                <ToolButton $width={23} $active>
                    <PanelIcon side="left" />
                </ToolButton>
                <ToolSeparator $left={2} $right={5} />
                <ToolButton $width={24}>
                    <RefreshIcon />
                </ToolButton>
                <ToolSeparator $left={1} $right={4} />
                <ToolButton $width={22}>
                    <HelpIcon />
                </ToolButton>
                <ToolButton $width={26}>
                    <PanelIcon side="right" />
                </ToolButton>
            </Toolbar>
            <Workspace>
                <TreePanel>
                    {treeNodes.map((node) => (
                        <TreeRow key={node.label + node.level} $level={node.level}>
                            {node.level > 0 && (
                                <ChevronSlot>
                                    {node.chevron && <Chevron open={node.chevron === 'open'} />}
                                </ChevronSlot>
                            )}
                            <TreeNode $selected={node.selected}>
                                {node.icon}
                                <TreeLabel>{node.label}</TreeLabel>
                            </TreeNode>
                        </TreeRow>
                    ))}
                </TreePanel>
                <DetailPane>
                    <PaneTitle>TestGPO</PaneTitle>
                    <TabStrip>
                        {tabs.map(([label, width, active]) => (
                            <Tab key={label} $width={width} $active={active}>
                                {label}
                            </Tab>
                        ))}
                    </TabStrip>
                    <TabBody>
                        <InfoText>These groups and users have the specified permission for this GPO</InfoText>
                        <FieldLabel>Groups and users:</FieldLabel>
                        <ListBox>
                            <HeaderRow>
                                <HeaderCell $width={712} $first>
                                    Name
                                    <SortCaret width="9" height="5" viewBox="0 0 9 5">
                                        <path d="M.5 4.500l4-4 4 4" fill="none" stroke="#8a8a8a" />
                                    </SortCaret>
                                </HeaderCell>
                                <HeaderCell $width={777}>Allowed Permissions</HeaderCell>
                                <HeaderCell $width={69}>Inherited</HeaderCell>
                            </HeaderRow>
                            {permissionRows.map(([name, permission, inherited], index) => (
                                <DataRow key={name}>
                                    <RowIcon>
                                        <UsersIcon selected={index === 0} />
                                    </RowIcon>
                                    <RowCells $selected={index === 0}>
                                        <RowCell $width={690} $pad={2}>
                                            {name}
                                        </RowCell>
                                        <RowCell $width={777} $pad={7}>
                                            {permission}
                                        </RowCell>
                                        <RowCell $width={70} $pad={6}>
                                            {inherited}
                                        </RowCell>
                                    </RowCells>
                                </DataRow>
                            ))}
                            <MouseArrow />
                        </ListBox>
                        <ButtonRow>
                            <DialogButton>Add...</DialogButton>
                            <DialogButton>Remove</DialogButton>
                            <DialogButton $disabled>Properties</DialogButton>
                            <DialogButton $push>Advanced...</DialogButton>
                        </ButtonRow>
                    </TabBody>
                </DetailPane>
            </Workspace>
            <StatusBar>
                <StatusCell $width={133} />
                <StatusCell $width={88} />
            </StatusBar>
            <Taskbar>
                <ShellButton $width={48}>
                    <WindowsLogo />
                </ShellButton>
                <ShellButton $width={48}>
                    <SearchIcon />
                </ShellButton>
                <ShellButton $width={50}>
                    <TaskViewIcon />
                </ShellButton>
                <AppButton>
                    <IeIcon />
                </AppButton>
                <AppButton $state="running">
                    <FolderAppIcon />
                </AppButton>
                <AppButton>
                    <EdgeIcon />
                </AppButton>
                <AppButton>
                    <PowerShellIcon />
                </AppButton>
                <AppButton $state="active">
                    <ChromeIcon />
                </AppButton>
                <AppButton>
                    <FirefoxIcon />
                </AppButton>
                <AppButton $state="running">
                    <NotepadIcon />
                </AppButton>
                <AppButton $state="focused">
                    <LargeScroll badge />
                </AppButton>
                <AppButton $state="running">
                    <RingIcon />
                </AppButton>
                <AppButton $state="running">
                    <LargeScroll />
                </AppButton>
                <Tray>
                    <TrayIcon>
                        <TrayChevron />
                    </TrayIcon>
                    <TrayIcon>
                        <NetworkIcon />
                    </TrayIcon>
                    <TrayIcon>
                        <VolumeIcon />
                    </TrayIcon>
                    <Clock>
                        18:23
                        <br />
                        02-07-2026
                    </Clock>
                    <NotifyButton>
                        <NotificationIcon />
                    </NotifyButton>
                </Tray>
            </Taskbar>
        </Screen>
    );
};

export default App;
